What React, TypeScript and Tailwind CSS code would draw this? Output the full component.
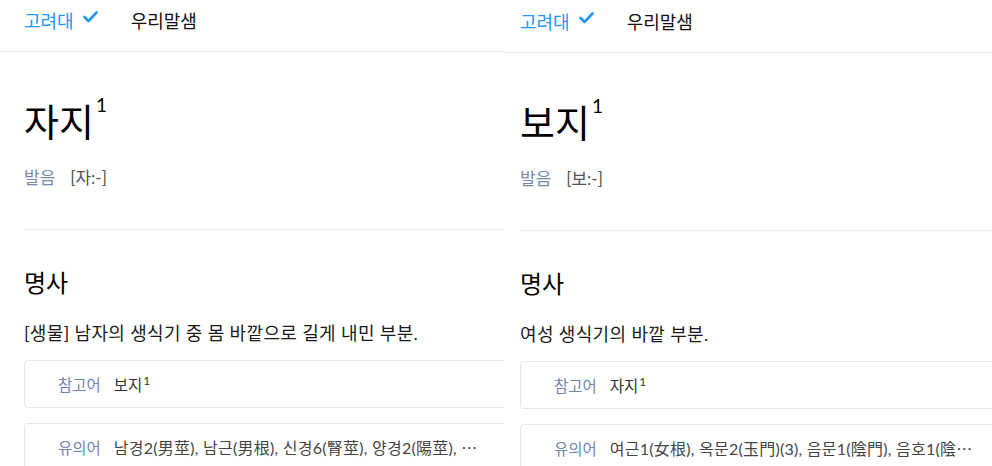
import React from "react";

type Entry = {
  word: string;
  pron: string;
  def: string;
  ref: string;
  syn: string;
};

const entries: Entry[] = [
  {
    word: "자지",
    pron: "[자:-]",
    def: "[생물] 남자의 생식기 중 몸 바깥으로 길게 내민 부분.",
    ref: "보지",
    syn: "남경2(男莖), 남근(男根), 신경6(腎莖), 양경2(陽莖), ⋯",
  },
  {
    word: "보지",
    pron: "[보:-]",
    def: "여성 생식기의 바깥 부분.",
    ref: "자지",
    syn: "여근1(女根), 옥문2(玉門)(3), 음문1(陰門), 음호1(陰⋯",
  },
];

function Check() {
  return (
    <svg width="15" height="12" viewBox="0 0 15 12" className="mb-[9px] ml-[9px]">
      <polyline
        points="1.5,6 5.5,10 13.5,1.5"
        fill="none"
        stroke="#2196f3"
        strokeWidth="2.6"
        strokeLinecap="round"
        strokeLinejoin="round"
      />
    </svg>
  );
}

function Panel({ e, first }: { e: Entry; first: boolean }) {
  return (
    <div
      className={`overflow-hidden bg-white ${first ? "w-[503px] shrink-0" : "flex-1 min-w-0"}`}
    >
      {/* HEADER */}
      <div
        className={`flex items-center border-b border-[#ececec] pb-2 ${
          first ? "h-[52px] pl-6" : "h-[53px] pl-[17px]"
        }`}
      >
        <span className="text-[18px] text-[#2196f3]">고려대</span>
        <Check />
        <span className="ml-[33px] text-[18px] text-[#111]">우리말샘</span>
      </div>

      <div className={first ? "pl-6" : "pl-[17px]"}>
        {/* TITLE */}
        <div className="mt-[46px] flex items-start leading-[46px]">
          <h1 className="text-[38px] text-black">{e.word}</h1>
          <sup className="ml-[2px] mt-[6px] text-[19px] leading-none text-black">1</sup>
        </div>

        {/* PRONUNCIATION */}
        <div className="mt-[22px] flex text-[17px] leading-6">
          <span className="text-[#7489ab]">발음</span>
          <span className="ml-[15px] text-[#555]">{e.pron}</span>
        </div>

        <div className="mt-[39px] border-t border-[#ececec]" />

        {/* POS */}
        <h2 className="mt-[37px] text-[24px] leading-8 text-black">명사</h2>

        <p className="mt-[22px] whitespace-nowrap text-[18px] leading-6 tracking-[0.35px] text-[#1a1a1a]">
          {e.def}
        </p>

        {/* CARDS */}
        <div className="mt-[15px] flex h-[48px] w-[700px] items-center rounded border border-[#e6e6e6] pl-[33px] pt-[3px]">
          <span className="text-[15.5px] text-[#6f86ad]">참고어</span>
          <span className="ml-[13px] text-[15.5px] text-[#333]">
            {e.ref}
            <sup className="ml-[1px] text-[12px]">1</sup>
          </span>
        </div>

        <div className="mt-[15px] flex h-[60px] w-[700px] items-start rounded border border-[#e6e6e6] pl-[33px] pt-[12px]">
          <span className="whitespace-nowrap text-[15.5px] leading-6 text-[#6f86ad]">유의어</span>
          <span className="ml-[13px] whitespace-nowrap text-[16px] leading-6 tracking-[0.25px] text-[#444]">
            {e.syn}
          </span>
        </div>
      </div>
    </div>
  );
}

export default function App() {
  return (
    <div
      className="flex h-[466px] w-[992px] overflow-hidden bg-white"
      style={{ fontFamily: 'Lato, "Noto Sans CJK KR", sans-serif' }}
    >
      {entries.map((e, i) => (
        <Panel key={i} e={e} first={i === 0} />
      ))}
    </div>
  );
}
